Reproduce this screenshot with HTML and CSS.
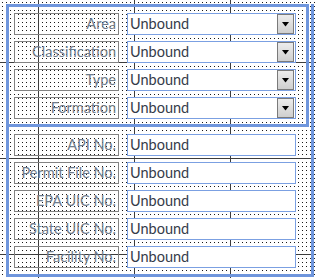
FILE: index.html
```html
<!DOCTYPE html>
<html lang="en">
<head>
    <meta charset="UTF-8">
    <title>Well Details - Design View</title>
    <link rel="stylesheet" href="styles.css">
</head>
<body>
    <div class="canvas">
        <div class="frame">
            <div class="group combos">
                <div class="row">
                    <div class="label">Area</div>
                    <div class="field combo">Unbound<span class="drop"><svg width="7" height="5" viewBox="0 0 7 5"><path d="M0 0h7L3.5 4.5z" fill="#000"/></svg></span></div>
                </div>
                <div class="row">
                    <div class="label">Classification</div>
                    <div class="field combo">Unbound<span class="drop"><svg width="7" height="5" viewBox="0 0 7 5"><path d="M0 0h7L3.5 4.5z" fill="#000"/></svg></span></div>
                </div>
                <div class="row">
                    <div class="label">Type</div>
                    <div class="field combo">Unbound<span class="drop"><svg width="7" height="5" viewBox="0 0 7 5"><path d="M0 0h7L3.5 4.5z" fill="#000"/></svg></span></div>
                </div>
                <div class="row">
                    <div class="label">Formation</div>
                    <div class="field combo">Unbound<span class="drop"><svg width="7" height="5" viewBox="0 0 7 5"><path d="M0 0h7L3.5 4.5z" fill="#000"/></svg></span></div>
                </div>
            </div>

            <div class="group texts">
                <div class="row">
                    <div class="label">API No.</div>
                    <div class="field">Unbound</div>
                </div>
                <div class="row">
                    <div class="label">Permit File No.</div>
                    <div class="field">Unbound</div>
                </div>
                <div class="row">
                    <div class="label">EPA UIC No.</div>
                    <div class="field">Unbound</div>
                </div>
                <div class="row">
                    <div class="label">State UIC No.</div>
                    <div class="field">Unbound</div>
                </div>
                <div class="row">
                    <div class="label">Facility No.</div>
                    <div class="field">Unbound</div>
                </div>
            </div>
        </div>
    </div>
</body>
</html>
```

FILE: styles.css
```css
body {
    margin: 0;
    font-family: "Lato", "Liberation Sans", sans-serif;
    background-color: #fff;
}

/* design grid: dots every 4px, ruler lines every 96px */
.canvas {
    width: 316px;
    height: 278px;
    overflow: hidden;
    background-color: #fff;
    background-image:
        linear-gradient(to right, #3c3c3c 1px, transparent 1px),
        linear-gradient(to bottom, #3c3c3c 1px, transparent 1px),
        conic-gradient(from 270deg at 1px 1px, #1a1a1a 90deg, transparent 0);
    background-size: 96px 100%, 100% 96px, 4px 4px;
    background-position: 38px 0, 0 62px, 2px 2px;
}

.frame {
    box-sizing: border-box;
    width: 308px;
    height: 273px;
    margin-left: 6px;
    border: 3px solid #6f96dd;
    border-top: none;
}

.group {
    display: flex;
    flex-direction: column;
    gap: 6px;
    padding-left: 5px;
}

/* upper layout box */
.combos {
    box-sizing: border-box;
    width: 300px;
    margin-top: 4px;
    padding-top: 6px;
    padding-bottom: 5px;
    border: 3px solid #6f96dd;
    border-left: none;
}

.texts {
    margin-top: -3px;
    padding-top: 10px;
}

.row {
    display: flex;
    gap: 8px;
    height: 22px;
}

.label {
    box-sizing: border-box;
    width: 105px;
    height: 22px;
    border: 1px solid #828282;
    padding-right: 2px;
    text-align: right;
    font-size: 14.5px;
    line-height: 20px;
    color: #6f7b8b;
    white-space: nowrap;
}

.field {
    box-sizing: border-box;
    position: relative;
    width: 169px;
    height: 22px;
    border: 1px solid #7ba0e2;
    background-color: #fff;
    padding-left: 2px;
    font-size: 14.5px;
    line-height: 20px;
    color: #353c4a;
}

.drop {
    position: absolute;
    top: 0;
    right: 1px;
    box-sizing: border-box;
    width: 17px;
    height: 20px;
    border: 1px solid #7a7a7a;
    background: linear-gradient(to bottom, #ececec, #cfcfcf);
    display: flex;
    align-items: center;
    justify-content: center;
}
```
